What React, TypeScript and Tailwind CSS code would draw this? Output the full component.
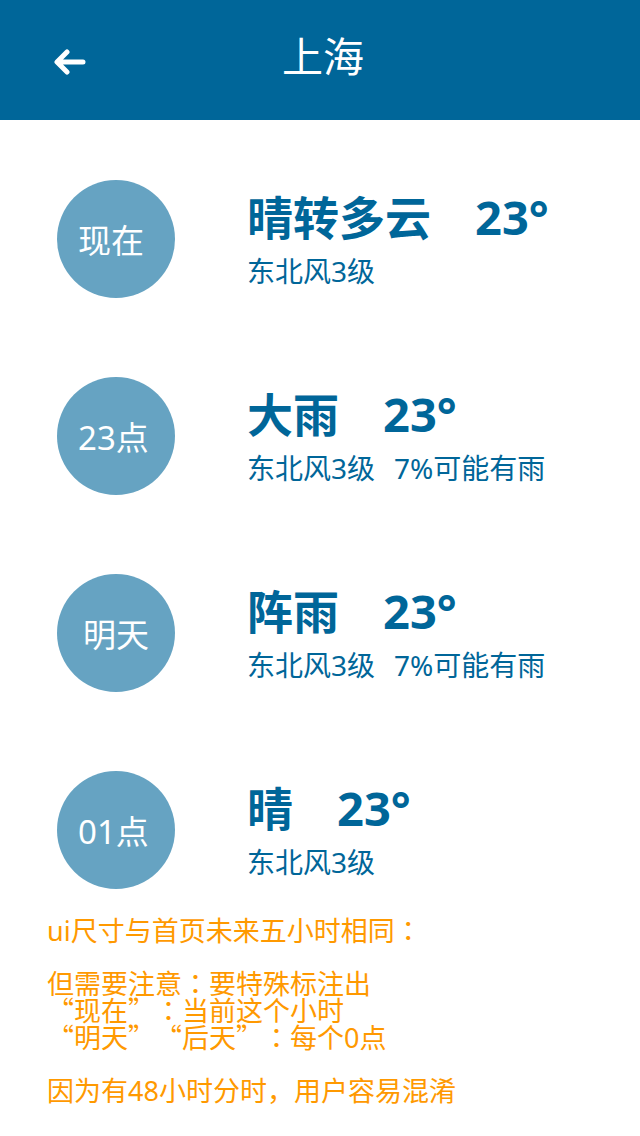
type Forecast = {
  time: string;
  centered?: boolean;
  condition: string;
  temperature: string;
  wind: string;
  rain?: string;
};

const forecasts: Forecast[] = [
  { time: "现在", condition: "晴转多云", temperature: "23°", wind: "东北风3级" },
  { time: "23点", condition: "大雨", temperature: "23°", wind: "东北风3级", rain: "7%可能有雨" },
  { time: "明天", centered: true, condition: "阵雨", temperature: "23°", wind: "东北风3级", rain: "7%可能有雨" },
  { time: "01点", condition: "晴", temperature: "23°", wind: "东北风3级" },
];

function Header() {
  return (
    <header className="grid h-[120px] grid-cols-[1fr_auto_1fr] items-center bg-[#006699] pr-12 pl-[54px] text-white">
      <button type="button" aria-label="返回" className="w-8 pt-1">
        <svg viewBox="0 0 32 26" className="h-[26px] w-8" fill="none" stroke="currentColor" strokeWidth="5" strokeLinecap="round" strokeLinejoin="round">
          <path d="M13 3 3 13l10 10M4 13h25" />
          <path d="M6 11v4" />
        </svg>
      </button>
      <h1 className="pb-2 text-[41px] leading-[60px]">上海</h1>
    </header>
  );
}

function ForecastRow({ item }: { item: Forecast }) {
  return (
    <li className="flex h-[118px] items-center">
      <div
        className={
          item.centered
            ? "flex size-[118px] shrink-0 items-center justify-center rounded-full bg-[#66a3c2] pt-1 text-[33px] leading-10 text-white"
            : "flex size-[118px] shrink-0 items-center rounded-full bg-[#66a3c2] pt-1 pl-[21px] text-[33px] leading-10 text-white"
        }
      >
        {item.time}
      </div>
      <div className="ml-[72px] whitespace-nowrap text-[#006699]">
        <h2 className="flex items-baseline gap-11 pb-1 text-[46px] leading-[60px] font-bold">
          <span>{item.condition}</span>
          <span className="text-[47px]">{item.temperature}</span>
        </h2>
        <p className="flex gap-[19px] text-[28px] leading-10">
          <span>{item.wind}</span>
          {item.rain && <span>{item.rain}</span>}
        </p>
      </div>
    </li>
  );
}

/* Full-width quotes and centred colons. */
function Note({ text }: { text: string }) {
  return (
    <>
      {text.split(/([“”]+|：)/).map((part, i) => {
        if (part === "：") {
          return (
            <span key={i} lang="zh-TW" className="font-['Noto_Sans_CJK_TC',sans-serif] leading-[0px]">
              {part}
            </span>
          );
        }
        if (/^[“”]/.test(part)) {
          return (
            <span key={i} className="font-['Noto_Sans_CJK_SC',sans-serif] leading-[0px]">
              {part}
            </span>
          );
        }
        return part;
      })}
    </>
  );
}

export default function App() {
  return (
    <div lang="zh-CN" className="min-h-screen bg-white font-['Noto_Sans','Noto_Sans_CJK_SC',sans-serif]">
      <Header />
      <main className="pt-[60px] pb-5">
        <ul className="flex flex-col gap-[79px] pl-[57px]">
          {forecasts.map((item) => (
            <ForecastRow key={item.time} item={item} />
          ))}
        </ul>
        <section className="mt-7 flex flex-col gap-[26px] pl-[47px] text-[27px] leading-[27px] text-[#ff9900] [text-spacing-trim:space-all]">
          <p><Note text="ui尺寸与首页未来五小时相同：" /></p>
          <p>
            <Note text="但需要注意：要特殊标注出" />
            <br />
            <Note text="“现在”：当前这个小时" />
            <br />
            <Note text="“明天”“后天”：每个0点" />
          </p>
          <p><Note text="因为有48小时分时，用户容易混淆" /></p>
        </section>
      </main>
    </div>
  );
}
